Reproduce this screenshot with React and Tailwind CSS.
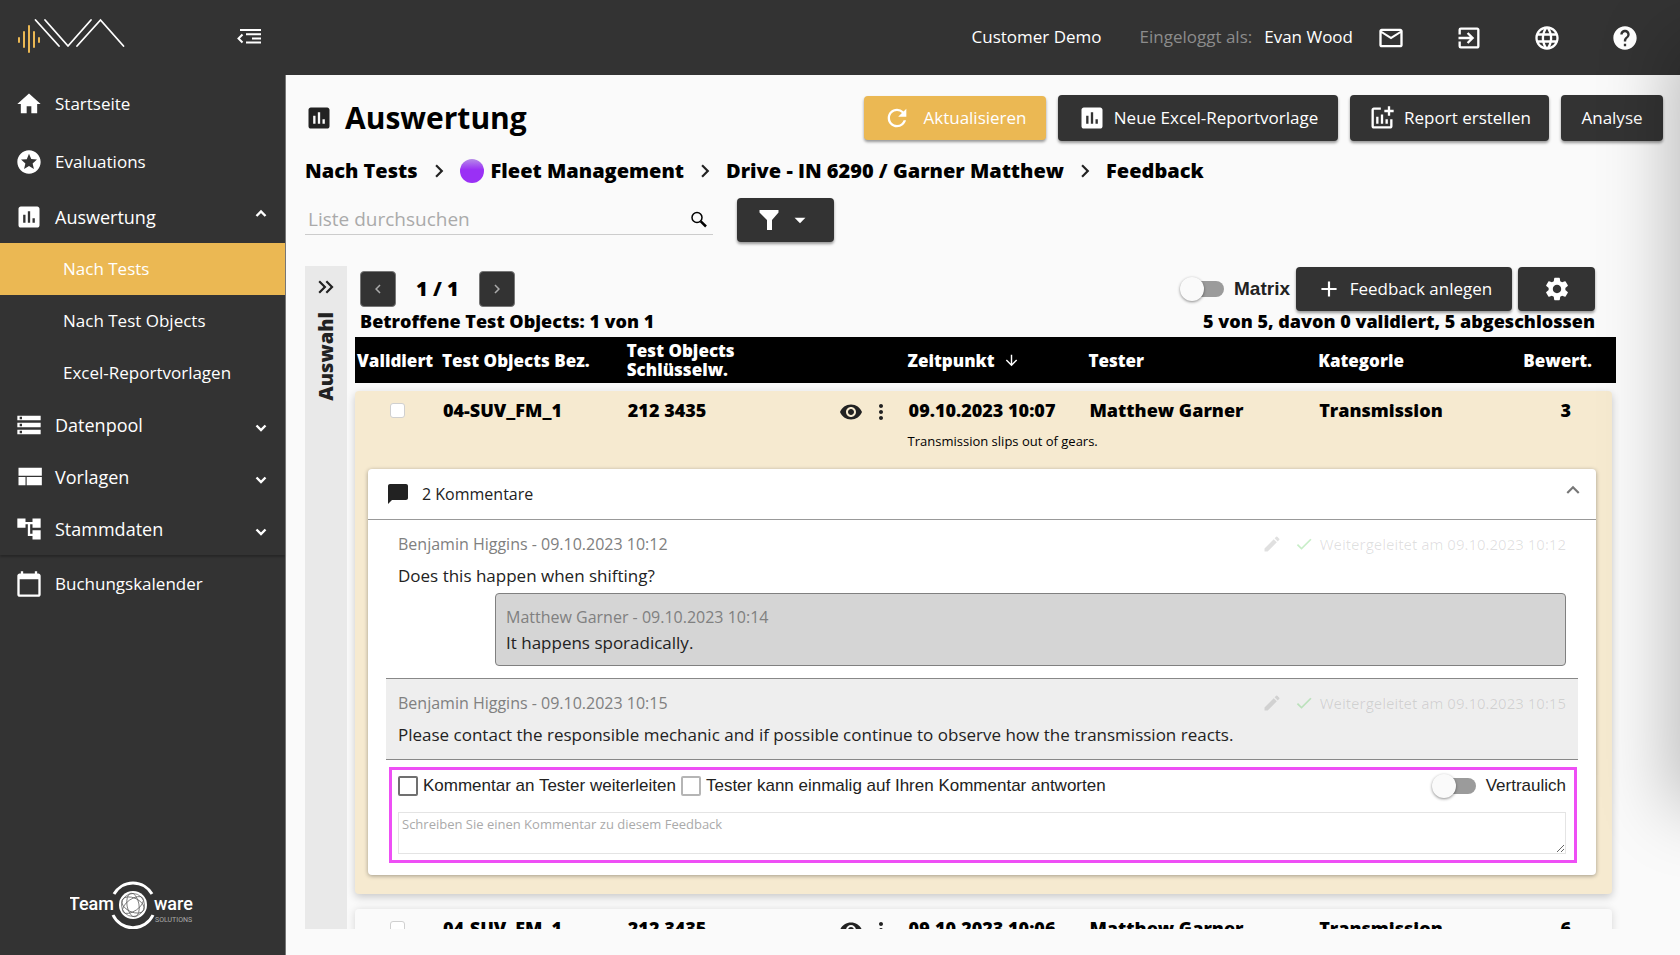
import React, { useState } from "react";
import {
  MdHome,
  MdStars,
  MdAssessment,
  MdStorage,
  MdAccountTree,
  MdCalendarToday,
  MdMailOutline,
  MdExitToApp,
  MdLanguage,
  MdHelp,
  MdRefresh,
  MdAddchart,
  MdAdd,
  MdSettings,
  MdRemoveRedEye,
  MdMoreVert,
  MdEdit,
  MdCheck,
  MdChevronLeft,
  MdChevronRight,
  MdChatBubble,
  MdArrowDownward,
  MdArrowDropDown,
  MdKeyboardArrowUp,
  MdKeyboardDoubleArrowRight,
} from "react-icons/md";

const columns =
  "grid grid-cols-[85px_minmax(0,185fr)_minmax(0,212fr)_69px_minmax(0,181fr)_minmax(0,230fr)_minmax(0,206fr)_94px]";
const rowColumns =
  "grid grid-cols-[85px_minmax(0,185fr)_minmax(0,212fr)_69px_minmax(0,181fr)_minmax(0,230fr)_minmax(0,206fr)_90px]";

const QuiltIcon = () => (
  <svg className="w-7 h-7" viewBox="0 0 24 24" fill="currentColor">
    <path d="M3 4h20v7H3zM3 12h6v7H3zM10 12h13v7H10z" />
  </svg>
);

const Caret = ({ up }) => (
  <svg className="w-3 h-5" viewBox="0 0 12 20" fill="none" stroke="currentColor" strokeWidth="2.400">
    <path d={up ? "M1.500 9L6 4.500 10.500 9" : "M1.500 10.500L6 15l4.500-4.500"} />
  </svg>
);

const Logo = () => (
  <svg className="w-[108px] h-9" viewBox="17 18 108 36" fill="none" strokeLinecap="round">
    <g stroke="#ebb853" strokeWidth="2">
      <path d="M19 38v4M24 32v15M29 26v26M34 32v15M39 38v4" />
    </g>
    <path d="M35.500 20L59 46M45 20l23 26 23-26M77 46l23.500-26L123.500 46" stroke="#fff" strokeWidth="1.800" />
  </svg>
);

const MenuIcon = () => (
  <svg className="w-6 h-5" viewBox="0 0 24 20" fill="none" stroke="currentColor" strokeWidth="2">
    <path d="M3 4h21M9 8.200h15M15 12.500h9M9 16.500h15M5.500 8.500l-4 4 4 4" />
  </svg>
);

const TeamwareLogo = () => (
  <svg className="w-[128px] h-12" viewBox="70 881 128 48" fill="none">
    <g stroke="#fff" strokeWidth="3">
      <path d="M114 894a22 22 0 0 1 38 0M113 915a22 22 0 0 0 40 0" />
    </g>
    <circle cx="133" cy="905" r="14" fill="#fff" />
    <g stroke="#555" strokeWidth="0.700">
      <ellipse cx="133" cy="905" rx="12" ry="6" transform="rotate(-35 133 905)" />
      <ellipse cx="133" cy="905" rx="12" ry="7" transform="rotate(25 133 905)" />
      <ellipse cx="133" cy="905" rx="12" ry="6" transform="rotate(80 133 905)" />
      <circle cx="133" cy="905" r="11.500" />
    </g>
    <g fill="#fff" fontFamily="Roboto, sans-serif" fontWeight="500">
      <text x="114" y="910" fontSize="18" textAnchor="end">Team</text>
      <text x="154" y="910" fontSize="18">ware</text>
      <text x="155" y="922" fontSize="7" fontWeight="400" fill="#aaa">SOLUTIONS</text>
    </g>
  </svg>
);

const mainLinks = [
  { label: "Startseite", icon: <MdHome size={28} /> },
  { label: "Evaluations", icon: <MdStars size={28} /> },
];

const subLinks = ["Nach Tests", "Nach Test Objects", "Excel-Reportvorlagen"];

const groups = [
  { label: "Datenpool", icon: <MdStorage size={28} /> },
  { label: "Vorlagen", icon: <QuiltIcon /> },
  { label: "Stammdaten", icon: <MdAccountTree size={28} /> },
];

const NavLink = ({ label, icon }) => (
  <a href="#" className="flex items-center gap-3 h-[58px] pl-[15px]">
    {icon}
    {label}
  </a>
);

const NavGroup = ({ label, icon, open, onClick }) => (
  <button type="button" onClick={onClick} className="flex items-center gap-3 w-full h-[52px] pl-[15px] pr-[18px] text-[18px]">
    {icon}
    <span className="flex-1 text-left">{label}</span>
    <Caret up={open} />
  </button>
);

const Sidebar = () => {
  const [open, setOpen] = useState(true);

  return (
    <aside className="flex flex-col w-[285px] shrink-0 bg-[#333] text-white text-[17px]">
      <div className="flex items-center justify-between h-[75px] pl-[17px] pr-6 pb-1">
        <Logo />
        <button type="button" aria-label="Menü einklappen">
          <MenuIcon />
        </button>
      </div>
      <nav className="flex-1">
        {mainLinks.map((l) => (
          <NavLink key={l.label} {...l} />
        ))}
        <NavGroup label="Auswertung" icon={<MdAssessment size={28} />} open={open} onClick={() => setOpen(!open)} />
        {open &&
          subLinks.map((label, i) => (
            <a
              key={label}
              href="#"
              className={`flex items-center h-[52px] pl-[63px] ${i === 0 ? "bg-[#ebb853]" : ""}`}
            >
              {label}
            </a>
          ))}
        <div className="shadow-[0_2px_2px_rgba(0,0,0,0.25)]">
          {groups.map((g) => (
            <NavGroup key={g.label} {...g} />
          ))}
        </div>
        <NavLink label="Buchungskalender" icon={<MdCalendarToday size={28} />} />
      </nav>
      <div className="pl-[70px] pb-[26px]">
        <TeamwareLogo />
      </div>
    </aside>
  );
};

const TopBar = () => (
  <header className="flex items-center justify-end h-[75px] shrink-0 pr-[41px] bg-[#333] text-white text-[17px]">
    <span className="mr-[38px] pb-[2px]">Customer Demo</span>
    <span className="mr-3 pb-[2px] text-[#8c8c8c]">Eingeloggt als:</span>
    <span className="mr-6 pb-[2px]">Evan Wood</span>
    <div className="flex gap-[50px]">
      <button type="button" aria-label="Nachrichten"><MdMailOutline size={28} /></button>
      <button type="button" aria-label="Abmelden"><MdExitToApp size={28} /></button>
      <button type="button" aria-label="Sprache"><MdLanguage size={28} /></button>
      <button type="button" aria-label="Hilfe"><MdHelp size={28} /></button>
    </div>
  </header>
);

const Button = ({ children, className = "", ...props }) => (
  <button
    type="button"
    className={`flex items-center justify-center rounded text-white text-[17px] font-normal shadow-[0_2px_3px_rgba(0,0,0,0.4)] ${className}`}
    {...props}
  >
    {children}
  </button>
);

const Toggle = ({ label, className = "" }) => {
  const [on, setOn] = useState(false);

  return (
    <label className={`flex items-center gap-2 ${className}`}>
      <input
        type="checkbox"
        role="switch"
        checked={on}
        onChange={() => setOn(!on)}
        className="appearance-none relative w-[46px] h-6 before:block before:relative before:z-10 before:size-6 before:rounded-full before:bg-[#fafafa] before:shadow-[0_1px_3px_rgba(0,0,0,0.45)] after:absolute after:left-1 after:right-[2px] after:inset-y-1 after:rounded-full after:bg-[#9b9b9b] checked:before:ml-[22px]"
      />
      {label}
    </label>
  );
};

const Separator = () => <MdChevronRight size={26} className="text-[#222]" />;

const PageHead = () => (
  <>
    <div className="flex items-center justify-between pr-[17px]">
      <h1 className="flex items-center gap-3 text-[30px] leading-[46px] font-bold text-black">
        <MdAssessment size={28} className="text-[#222]" />
        Auswertung
      </h1>
      <div className="flex items-center gap-3">
        <Button className="gap-3 w-[182px] h-11 bg-[#ebb853]">
          <MdRefresh size={28} />
          Aktualisieren
        </Button>
        <Button className="gap-2 w-[280px] h-[46px] bg-[#333]">
          <MdAssessment size={28} />
          Neue Excel-Reportvorlage
        </Button>
        <Button className="gap-2 w-[199px] h-[46px] bg-[#333]">
          <MdAddchart size={28} />
          Report erstellen
        </Button>
        <Button className="w-[102px] h-[46px] bg-[#333]">Analyse</Button>
      </div>
    </div>
    <nav className="flex items-center gap-2 h-[30px] mt-[15px] text-[20px] font-extrabold text-black">
      <a href="#">Nach Tests</a>
      <Separator />
      <a href="#" className="flex items-center gap-[7px]">
        <span className="size-6 rounded-full bg-[linear-gradient(#b68be8,#9a30f5_45%)]" />
        Fleet Management
      </a>
      <Separator />
      <a href="#">Drive - IN 6290 / Garner Matthew</a>
      <Separator />
      <a href="#">Feedback</a>
    </nav>
    <div className="flex items-center gap-6 mt-3">
      <div className="flex items-center w-[408px] h-[30px] border-b border-[#ccc]">
        <input
          type="text"
          aria-label="Liste durchsuchen"
          placeholder="Liste durchsuchen"
          className="flex-1 pl-[3px] text-[19px] outline-none placeholder-[#aaa]"
        />
        <svg className="w-5 h-5 mr-1 text-black" viewBox="0 0 20 20" fill="none" stroke="currentColor">
          <circle cx="8" cy="7.500" r="5" strokeWidth="1.500" />
          <path d="M11.800 11.300l5.200 5.200" strokeWidth="2.500" />
        </svg>
      </div>
      <Button className="gap-2 w-[97px] h-11 bg-[#333]" aria-label="Filter">
        <svg className="w-5 h-5" viewBox="0 0 20 20" fill="currentColor">
          <path d="M.5 0h19v2.500L13 10v10H8V10L.5 2.500z" />
        </svg>
        <MdArrowDropDown size={26} />
      </Button>
    </div>
  </>
);

const Toolbar = () => (
  <div className="pl-[13px] pr-[85px] font-extrabold text-black">
    <div className="flex items-center justify-between h-[46px]">
      <div className="flex items-center gap-5 text-[20px]">
        <button type="button" aria-label="Zurück" className="flex items-center justify-center size-9 rounded-sm bg-[#333] text-[#aaa] border border-[#777]">
          <MdChevronLeft size={18} />
        </button>
        1 / 1
        <button type="button" aria-label="Weiter" className="flex items-center justify-center size-9 rounded-sm bg-[#333] text-[#aaa] border border-[#777]">
          <MdChevronRight size={18} />
        </button>
      </div>
      <div className="flex items-center gap-[6px]">
        <Toggle label="Matrix" className="text-[19px] text-[#222] font-['Liberation_Sans',sans-serif] font-bold" />
        <Button className="gap-2 w-[216px] h-11 bg-[#333]">
          <MdAdd size={26} />
          Feedback anlegen
        </Button>
        <Button className="w-[77px] h-11 bg-[#333]" aria-label="Einstellungen">
          <MdSettings size={28} />
        </Button>
      </div>
    </div>
    <div className="flex justify-between h-[25px] leading-[18px] text-[18px]">
      <span>Betroffene Test Objects: 1 von 1</span>
      <span>5 von 5, davon 0 validiert, 5 abgeschlossen</span>
    </div>
  </div>
);

const FeedbackRow = ({ time, rating }) => (
  <tr className={`${rowColumns} h-[38px] items-center text-[18px] font-extrabold text-black`}>
    <td className="flex justify-center">
      <input type="checkbox" aria-label="Validiert" className="appearance-none size-[15px] rounded-[3px] bg-white border border-[#d0d0d0]" />
    </td>
    <td className="pl-[3px]">04-SUV_FM_1</td>
    <td className="pl-[3px]">212 3435</td>
    <td className="flex gap-[6px] pl-[2px] pt-1 text-[#222]">
      <button type="button" aria-label="Anzeigen"><MdRemoveRedEye size={24} /></button>
      <button type="button" aria-label="Mehr"><MdMoreVert size={24} /></button>
    </td>
    <td className="pl-[3px] whitespace-nowrap">{time}</td>
    <td className="pl-[3px]">Matthew Garner</td>
    <td className="pl-[3px]">Transmission</td>
    <td className="text-right pr-[41px]">{rating}</td>
  </tr>
);

const CommentHead = ({ author, time }) => (
  <div className="flex items-center justify-between h-6 text-[15px]">
    <span className="text-[16px] text-[#808080]">{author} - {time}</span>
    <span className="flex items-center text-black/12">
      <MdEdit size={20} className="mr-3" />
      <MdCheck size={20} className="mr-[6px] text-[#22bb22]/25" />
      Weitergeleitet am {time}
    </span>
  </div>
);

const CommentForm = () => (
  <form className="ml-[3px] mr-px mt-[7px] pt-[2px] pl-[6px] pr-2 pb-[6px] border-3 border-[#ee4ff5] font-['Liberation_Sans',sans-serif] text-[17px]">
    <div className="flex items-center justify-between h-7">
      <div className="flex items-center gap-[5px]">
        <input id="forward" type="checkbox" className="appearance-none size-5 rounded-xs border-2 border-[#707070]" />
        <label htmlFor="forward">Kommentar an Tester weiterleiten</label>
        <input id="reply" type="checkbox" disabled className="appearance-none size-5 rounded-xs border-2 border-[#b5b5b5]" />
        <label htmlFor="reply">Tester kann einmalig auf Ihren Kommentar antworten</label>
      </div>
      <Toggle label="Vertraulich" />
    </div>
    <textarea
      aria-label="Kommentar"
      placeholder="Schreiben Sie einen Kommentar zu diesem Feedback"
      className="block w-full h-[42px] mt-3 px-[3px] py-[2px] border border-[#e4e4e4] text-[13px] font-['Open_Sans',sans-serif] placeholder-[#aaa]"
    />
  </form>
);

const Comments = () => (
  <section className="ml-[13px] mr-4 mt-2 pb-3 rounded bg-white text-[#222] shadow-[0_1px_4px_rgba(0,0,0,0.35)]">
    <button type="button" className="flex items-center w-full h-[51px] pl-[18px] pr-[10px] border-b border-[#999] text-[16px]">
      <MdChatBubble size={24} className="mr-3" />
      <span className="flex-1 text-left">2 Kommentare</span>
      <MdKeyboardArrowUp size={26} className="mb-2 text-[#777]" />
    </button>
    <div className="mx-[18px]">
      <article className="px-3 pt-3 pb-3">
        <CommentHead author="Benjamin Higgins" time="09.10.2023 10:12" />
        <p className="mt-2 h-6 text-[17px] leading-6">Does this happen when shifting?</p>
        <div className="ml-[97px] mt-[5px] h-[73px] px-[10px] py-[11px] rounded border border-[#808080] bg-[#d5d5d5]">
          <div className="h-[26px] text-[16px] text-[#808080]">Matthew Garner - 09.10.2023 10:14</div>
          <p className="text-[17px] leading-6">It happens sporadically.</p>
        </div>
      </article>
      <article className="h-[82px] px-3 pt-3 border-y border-[#888] bg-[#eee]">
        <CommentHead author="Benjamin Higgins" time="09.10.2023 10:15" />
        <p className="mt-2 text-[17px] leading-6">
          Please contact the responsible mechanic and if possible continue to observe how the transmission reacts.
        </p>
      </article>
      <CommentForm />
    </div>
  </section>
);

const FeedbackTable = () => (
  <table className="block">
    <thead className="block">
      <tr className={`${columns} h-[46px] items-center bg-black text-white text-[17px] leading-[19px] text-left [&>th]:font-extrabold`}>
        <th className="pl-[2px]">Validiert</th>
        <th className="pl-[2px]">Test Objects Bez.</th>
        <th className="pl-[2px]">Test Objects<br />Schlüsselw.</th>
        <th />
        <th className="flex items-center gap-2 pl-[2px]">
          Zeitpunkt
          <MdArrowDownward size={17} />
        </th>
        <th className="pl-[2px]">Tester</th>
        <th className="pl-[2px]">Kategorie</th>
        <th className="text-right pr-6">Bewert.</th>
      </tr>
    </thead>
    <tbody className="block mt-2 mr-1 pb-[19px] rounded bg-[#f6ead0] shadow-[0_3px_8px_rgba(0,0,0,0.2)]">
      <FeedbackRow time="09.10.2023 10:07" rating="3" />
      <tr className="block">
        <td className="block">
          <p className="grid grid-cols-[85px_minmax(0,185fr)_minmax(0,212fr)_69px_minmax(0,617fr)_90px] h-8 pt-[3px] text-[13px] text-black">
            <span className="col-start-5 pl-[2px]">Transmission slips out of gears.</span>
          </p>
          <Comments />
        </td>
      </tr>
    </tbody>
    <tbody className="block mt-[15px] mr-1 rounded bg-[#fafafa] shadow-[0_1px_8px_rgba(0,0,0,0.15)]">
      <FeedbackRow time="09.10.2023 10:06" rating="6" />
    </tbody>
  </table>
);

const App = () => {
  return (
    <div className="relative flex h-screen overflow-hidden bg-[#fafafa] font-['Open_Sans',sans-serif]">
      <Sidebar />
      <div className="flex flex-col flex-1 min-w-0">
        <TopBar />
        <main className="flex flex-col flex-1 min-h-0 pl-[19px] pt-5 pb-[26px] border-l border-[#777]">
          <PageHead />
          <div className="flex flex-1 min-h-0 mt-6">
            <button type="button" className="flex flex-col items-center justify-start gap-3 w-[42px] shrink-0 pt-2 bg-[#e9e9e9] text-[#222]">
              <MdKeyboardDoubleArrowRight size={26} />
              <span className="[writing-mode:vertical-rl] rotate-180 text-[20px] font-extrabold">Auswahl</span>
            </button>
            <div className="flex flex-col flex-1 min-w-0">
              <Toolbar />
              <div className="flex-1 min-h-0 overflow-hidden pl-2 pr-16">
                <FeedbackTable />
              </div>
            </div>
          </div>
        </main>
      </div>
      {/* shadow of the closed drawer behind the right edge */}
      <div className="absolute left-full top-12 h-[750px] w-20 pointer-events-none shadow-[0_0_70px_10px_rgba(0,0,0,0.25)]" />
    </div>
  );
};

export default App;
